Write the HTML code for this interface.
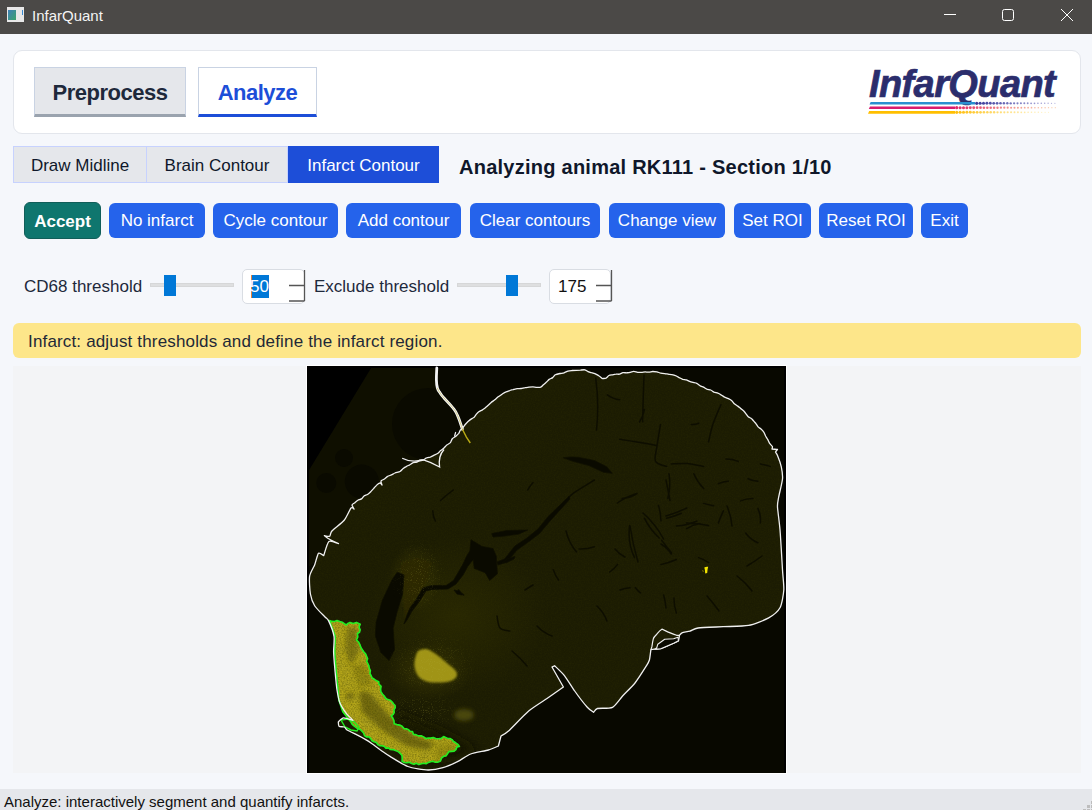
<!DOCTYPE html>
<html><head><meta charset="utf-8">
<style>
*{margin:0;padding:0;box-sizing:border-box}
html,body{width:1092px;height:810px;overflow:hidden;background:#f5f7fb;font-family:"Liberation Sans",sans-serif;position:relative}
.abs{position:absolute}
#title{left:0;top:0;width:1092px;height:34px;background:#4b4947}
#title .t{left:32px;top:7px;font-size:15px;color:#f4f4f4;line-height:18px}
#card{left:13px;top:50px;width:1068px;height:84px;background:#fff;border:1px solid #e3e6ec;border-radius:9px}
.mode{top:67px;height:50px;border:1px solid #c9d3e3;font-weight:bold;font-size:22px;letter-spacing:-0.5px;text-align:center;line-height:50px}
#pre{left:34px;width:152px;background:#e5e7eb;color:#1e293b;border-bottom:3px solid #9aa3ae}
#ana{left:198px;width:119px;background:#fff;color:#1d4ed8;border-bottom:3px solid #1d4ed8}
.tab{top:146px;height:37px;border:1px solid #c7d2fe;background:#e5e7eb;color:#0f172a;font-size:17px;line-height:37px;text-align:center}
.btn{top:203px;height:35px;background:#2563eb;color:#fff;font-size:17px;line-height:35px;text-align:center;border-radius:6px}
.lbl{font-size:17px;color:#1e293b;line-height:20px}
.track{height:4px;background:#dedfe0;border:1px solid #d6d7d8;top:283px}
.handle{width:12px;height:21px;background:#0078d7;top:275px}
.spin{top:269px;height:35px;background:#fff;border:1px solid #d9dde3;border-radius:5px}
#banner{left:13px;top:323px;width:1068px;height:35px;background:#fde68a;border-radius:6px}
#panel{left:13px;top:366px;width:1068px;height:407px;background:#f3f4f6}
#status{left:0;top:789px;width:1092px;height:21px;background:#e5e7eb}
</style></head><body>
<div id="title" class="abs">
  <svg class="abs" style="left:7px;top:7px" width="18" height="15" viewBox="0 0 18 15">
    <defs><linearGradient id="ig" x1="0" y1="0" x2="1" y2="1"><stop offset="0" stop-color="#3f7fb8"/><stop offset="1" stop-color="#3aa36a"/></linearGradient></defs>
    <rect x="0" y="0" width="17" height="15" fill="#e8e8e8"/>
    <rect x="1" y="3" width="8" height="10" fill="url(#ig)"/>
    <rect x="15" y="3" width="1" height="5" fill="#3a8ad0"/>
  </svg>
  <div class="abs t">InfarQuant</div>
  <svg class="abs" style="left:940px;top:0" width="152" height="34" viewBox="0 0 152 34">
    <line x1="4" y1="14.5" x2="16" y2="14.5" stroke="#fff" stroke-width="1"/>
    <rect x="62.5" y="9.5" width="11" height="11" rx="2" fill="none" stroke="#fff" stroke-width="1"/>
    <path d="M121 9 L133 21 M133 9 L121 21" stroke="#fff" stroke-width="1"/>
  </svg>
</div>

<div id="card" class="abs"></div>
<div id="pre" class="abs mode">Preprocess</div>
<div id="ana" class="abs mode">Analyze</div>
<!--LOGO--><div class="abs" style="left:869px;top:62px;font-family:'Liberation Sans',sans-serif;font-weight:bold;font-style:italic;font-size:38px;line-height:44px;color:#2b2d6c;letter-spacing:-0.6px;-webkit-text-stroke:0.7px #2b2d6c">InfarQuant</div><svg class="abs" style="left:862px;top:95px" width="200" height="25" viewBox="0 0 200 25"><path d="M8.7 7.0 L113.0 7.0 L113.0 9.6 L7.5 9.6 Z" fill="#2a8fd0"/><circle cx="114.7" cy="8.3" r="1.60" fill="#3a3a9a" opacity="1.00"/><circle cx="118.1" cy="8.3" r="1.56" fill="#3c3c9b" opacity="0.98"/><circle cx="121.5" cy="8.3" r="1.51" fill="#3e3e9d" opacity="0.96"/><circle cx="124.9" cy="8.3" r="1.47" fill="#40409e" opacity="0.93"/><circle cx="128.3" cy="8.3" r="1.43" fill="#4242a0" opacity="0.91"/><circle cx="131.7" cy="8.3" r="1.38" fill="#4444a2" opacity="0.89"/><circle cx="135.1" cy="8.3" r="1.34" fill="#4646a3" opacity="0.87"/><circle cx="138.5" cy="8.3" r="1.30" fill="#4848a5" opacity="0.85"/><circle cx="141.9" cy="8.3" r="1.25" fill="#4a4aa7" opacity="0.83"/><circle cx="145.3" cy="8.3" r="1.21" fill="#4c4ca8" opacity="0.80"/><circle cx="148.7" cy="8.3" r="1.17" fill="#4e4eaa" opacity="0.78"/><circle cx="152.1" cy="8.3" r="1.12" fill="#5050ac" opacity="0.76"/><circle cx="155.5" cy="8.3" r="1.08" fill="#5353ad" opacity="0.74"/><circle cx="158.9" cy="8.3" r="1.03" fill="#5555af" opacity="0.72"/><circle cx="162.3" cy="8.3" r="0.99" fill="#5757b1" opacity="0.70"/><circle cx="165.7" cy="8.3" r="0.95" fill="#5959b2" opacity="0.67"/><circle cx="169.1" cy="8.3" r="0.90" fill="#5b5bb4" opacity="0.65"/><circle cx="172.5" cy="8.3" r="0.86" fill="#5d5db6" opacity="0.63"/><circle cx="175.9" cy="8.3" r="0.82" fill="#5f5fb7" opacity="0.61"/><circle cx="179.3" cy="8.3" r="0.77" fill="#6161b9" opacity="0.59"/><circle cx="182.7" cy="8.3" r="0.73" fill="#6363bb" opacity="0.57"/><circle cx="186.1" cy="8.3" r="0.69" fill="#6565bc" opacity="0.54"/><circle cx="189.5" cy="8.3" r="0.64" fill="#6767be" opacity="0.52"/><circle cx="192.9" cy="8.3" r="0.60" fill="#6a6ac0" opacity="0.50"/><path d="M8.0 11.4 L93.0 11.4 L93.0 14.0 L6.8 14.0 Z" fill="#d81b6e"/><circle cx="94.7" cy="12.7" r="1.60" fill="#e02a6a" opacity="1.00"/><circle cx="98.1" cy="12.7" r="1.57" fill="#e02e69" opacity="0.98"/><circle cx="101.5" cy="12.7" r="1.53" fill="#e13269" opacity="0.97"/><circle cx="104.9" cy="12.7" r="1.50" fill="#e23668" opacity="0.95"/><circle cx="108.3" cy="12.7" r="1.46" fill="#e23a68" opacity="0.93"/><circle cx="111.7" cy="12.7" r="1.43" fill="#e33e68" opacity="0.91"/><circle cx="115.1" cy="12.7" r="1.39" fill="#e44267" opacity="0.90"/><circle cx="118.5" cy="12.7" r="1.36" fill="#e54667" opacity="0.88"/><circle cx="121.9" cy="12.7" r="1.32" fill="#e54a67" opacity="0.86"/><circle cx="125.3" cy="12.7" r="1.29" fill="#e64e66" opacity="0.84"/><circle cx="128.7" cy="12.7" r="1.26" fill="#e75266" opacity="0.83"/><circle cx="132.1" cy="12.7" r="1.22" fill="#e75666" opacity="0.81"/><circle cx="135.5" cy="12.7" r="1.19" fill="#e85a65" opacity="0.79"/><circle cx="138.9" cy="12.7" r="1.15" fill="#e95e65" opacity="0.78"/><circle cx="142.3" cy="12.7" r="1.12" fill="#ea6265" opacity="0.76"/><circle cx="145.7" cy="12.7" r="1.08" fill="#ea6764" opacity="0.74"/><circle cx="149.1" cy="12.7" r="1.05" fill="#eb6b64" opacity="0.72"/><circle cx="152.5" cy="12.7" r="1.01" fill="#ec6f64" opacity="0.71"/><circle cx="155.9" cy="12.7" r="0.98" fill="#ed7363" opacity="0.69"/><circle cx="159.3" cy="12.7" r="0.94" fill="#ed7763" opacity="0.67"/><circle cx="162.7" cy="12.7" r="0.91" fill="#ee7b63" opacity="0.66"/><circle cx="166.1" cy="12.7" r="0.88" fill="#ef7f62" opacity="0.64"/><circle cx="169.5" cy="12.7" r="0.84" fill="#ef8362" opacity="0.62"/><circle cx="172.9" cy="12.7" r="0.81" fill="#f08762" opacity="0.60"/><circle cx="176.3" cy="12.7" r="0.77" fill="#f18b61" opacity="0.59"/><circle cx="179.7" cy="12.7" r="0.74" fill="#f28f61" opacity="0.57"/><circle cx="183.1" cy="12.7" r="0.70" fill="#f29361" opacity="0.55"/><circle cx="186.5" cy="12.7" r="0.67" fill="#f39760" opacity="0.53"/><circle cx="189.9" cy="12.7" r="0.63" fill="#f49b60" opacity="0.52"/><circle cx="193.3" cy="12.7" r="0.60" fill="#f5a060" opacity="0.50"/><path d="M7.2 15.9 L93.0 15.9 L93.0 18.7 L6.0 18.7 Z" fill="#ffbf00"/><circle cx="94.7" cy="17.3" r="1.60" fill="#ffc010" opacity="1.00"/><circle cx="98.1" cy="17.3" r="1.56" fill="#ffc114" opacity="0.98"/><circle cx="101.5" cy="17.3" r="1.53" fill="#ffc219" opacity="0.96"/><circle cx="104.9" cy="17.3" r="1.49" fill="#ffc41e" opacity="0.94"/><circle cx="108.3" cy="17.3" r="1.45" fill="#ffc522" opacity="0.93"/><circle cx="111.7" cy="17.3" r="1.41" fill="#ffc727" opacity="0.91"/><circle cx="115.1" cy="17.3" r="1.38" fill="#ffc82c" opacity="0.89"/><circle cx="118.5" cy="17.3" r="1.34" fill="#ffca31" opacity="0.87"/><circle cx="121.9" cy="17.3" r="1.30" fill="#ffcb35" opacity="0.85"/><circle cx="125.3" cy="17.3" r="1.27" fill="#ffcd3a" opacity="0.83"/><circle cx="128.7" cy="17.3" r="1.23" fill="#ffce3f" opacity="0.81"/><circle cx="132.1" cy="17.3" r="1.19" fill="#ffd044" opacity="0.80"/><circle cx="135.5" cy="17.3" r="1.16" fill="#ffd148" opacity="0.78"/><circle cx="138.9" cy="17.3" r="1.12" fill="#ffd34d" opacity="0.76"/><circle cx="142.3" cy="17.3" r="1.08" fill="#ffd452" opacity="0.74"/><circle cx="145.7" cy="17.3" r="1.04" fill="#ffd657" opacity="0.72"/><circle cx="149.1" cy="17.3" r="1.01" fill="#ffd75b" opacity="0.70"/><circle cx="152.5" cy="17.3" r="0.97" fill="#ffd960" opacity="0.69"/><circle cx="155.9" cy="17.3" r="0.93" fill="#ffda65" opacity="0.67"/><circle cx="159.3" cy="17.3" r="0.90" fill="#ffdc6a" opacity="0.65"/><circle cx="162.7" cy="17.3" r="0.86" fill="#ffdd6e" opacity="0.63"/><circle cx="166.1" cy="17.3" r="0.82" fill="#ffdf73" opacity="0.61"/><circle cx="169.5" cy="17.3" r="0.79" fill="#ffe078" opacity="0.59"/><circle cx="172.9" cy="17.3" r="0.75" fill="#ffe27d" opacity="0.57"/><circle cx="176.3" cy="17.3" r="0.71" fill="#ffe381" opacity="0.56"/><circle cx="179.7" cy="17.3" r="0.67" fill="#ffe586" opacity="0.54"/><circle cx="183.1" cy="17.3" r="0.64" fill="#ffe68b" opacity="0.52"/><circle cx="186.5" cy="17.3" r="0.60" fill="#ffe890" opacity="0.50"/></svg><!--/LOGO-->

<div class="abs tab" style="left:13px;width:134px">Draw Midline</div>
<div class="abs tab" style="left:146px;width:142px">Brain Contour</div>
<div class="abs tab" style="left:288px;width:151px;background:#1d4ed8;border-color:#1d4ed8;color:#fff">Infarct Contour</div>
<div class="abs" style="left:459px;top:155px;font-size:20px;font-weight:bold;color:#0f172a;line-height:24px;letter-spacing:0.25px">Analyzing animal RK111 - Section 1/10</div>

<div class="abs btn" style="left:24px;width:77px;top:202px;height:37px;line-height:37px;background:#0f766e;border:1px solid #115e59;font-weight:bold">Accept</div>
<div class="abs btn" style="left:109px;width:96px">No infarct</div>
<div class="abs btn" style="left:213px;width:125px">Cycle contour</div>
<div class="abs btn" style="left:346px;width:115px">Add contour</div>
<div class="abs btn" style="left:470px;width:130px">Clear contours</div>
<div class="abs btn" style="left:609px;width:116px">Change view</div>
<div class="abs btn" style="left:734px;width:77px">Set ROI</div>
<div class="abs btn" style="left:819px;width:94px">Reset ROI</div>
<div class="abs btn" style="left:921px;width:47px">Exit</div>

<div class="abs lbl" style="left:24px;top:277px">CD68 threshold</div>
<div class="abs track" style="left:150px;width:84px"></div>
<div class="abs handle" style="left:164px"></div>
<div class="abs spin" style="left:242px;width:63px"></div>
<div class="abs" style="left:251px;top:275px;width:18px;height:23px;background:#0078d7"></div>
<div class="abs" style="left:251px;top:275px;width:1px;height:23px;background:#e8833a"></div>
<div class="abs" style="left:250px;top:276px;font-size:17px;line-height:21px;color:#fff">50</div>
<svg class="abs" style="left:286px;top:269px" width="22" height="36" viewBox="0 0 22 36"><path d="M3 16.5 H18.5 M18.5 1 V32 M3 32 H18.5" stroke="#555" stroke-width="1.3" fill="none"/></svg>
<div class="abs lbl" style="left:314px;top:277px">Exclude threshold</div>
<div class="abs track" style="left:457px;width:84px"></div>
<div class="abs handle" style="left:506px"></div>
<div class="abs spin" style="left:549px;width:62px"></div>
<div class="abs" style="left:558px;top:276px;font-size:17px;line-height:21px;color:#111">175</div>
<svg class="abs" style="left:593px;top:269px" width="22" height="36" viewBox="0 0 22 36"><path d="M3 16.5 H18.5 M18.5 1 V32 M3 32 H18.5" stroke="#555" stroke-width="1.3" fill="none"/></svg>

<div id="banner" class="abs"></div>
<div class="abs lbl" style="left:28px;top:332px;color:#1f2937;letter-spacing:0.16px">Infarct: adjust thresholds and define the infarct region.</div>

<div id="panel" class="abs"></div>
<div id="brainwrap" class="abs" style="left:306px;top:365px;width:481px;height:409px;border:1px solid #fff"></div>
<!--BRAIN--><svg class="abs" style="left:307px;top:366px" width="479" height="407" viewBox="0 0 479 407">
<defs>
<filter id="b2" filterUnits="userSpaceOnUse" x="-60" y="-60" width="600" height="530"><feGaussianBlur stdDeviation="2"/></filter>
<filter id="b4" filterUnits="userSpaceOnUse" x="-60" y="-60" width="600" height="530"><feGaussianBlur stdDeviation="6"/></filter>
<filter id="b1" filterUnits="userSpaceOnUse" x="-60" y="-60" width="600" height="530"><feGaussianBlur stdDeviation="0.9"/></filter>
<filter id="noise" filterUnits="userSpaceOnUse" x="0" y="0" width="479" height="407">
  <feTurbulence type="fractalNoise" baseFrequency="0.7" numOctaves="2" seed="3"/>
  <feColorMatrix values="0 0 0 0 0.05  0 0 0 0 0.05  0 0 0 0 0  0 0 0 -1.6 1.05"/>
</filter>
<filter id="noise2" filterUnits="userSpaceOnUse" x="0" y="0" width="479" height="407">
  <feTurbulence type="fractalNoise" baseFrequency="0.08" numOctaves="3" seed="11"/>
  <feColorMatrix values="0 0 0 0 0.3  0 0 0 0 0.28  0 0 0 0 0.03  0 0 0 -3 1.7"/>
</filter>
<radialGradient id="rg1"><stop offset="0" stop-color="#2a2902" stop-opacity="0.9"/><stop offset="1" stop-color="#2a2902" stop-opacity="0"/></radialGradient>
<radialGradient id="rg2"><stop offset="0" stop-color="#3a3704" stop-opacity="0.8"/><stop offset="1" stop-color="#3a3704" stop-opacity="0"/></radialGradient>
<filter id="speck" filterUnits="userSpaceOnUse" x="0" y="0" width="479" height="407">
  <feTurbulence type="fractalNoise" baseFrequency="0.9" numOctaves="1" seed="5"/>
  <feColorMatrix values="0 0 0 0 0.45  0 0 0 0 0.43  0 0 0 0 0.05  6 0 0 0 -3.4"/>
</filter>
<radialGradient id="rgm"><stop offset="0" stop-color="#fff"/><stop offset="1" stop-color="#000"/></radialGradient>
<mask id="smask" maskUnits="userSpaceOnUse" x="0" y="0" width="479" height="407">
  <ellipse cx="112" cy="210" rx="30" ry="42" fill="url(#rgm)"/>
  <ellipse cx="125" cy="300" rx="50" ry="40" fill="url(#rgm)"/>
  <ellipse cx="115" cy="345" rx="45" ry="25" fill="url(#rgm)"/>
</mask>
<clipPath id="bc"><path d="M2.6 210.3 C3.3 205.4 6.3 202.2 7.8 198.4 C9.3 194.6 10.0 188.8 11.5 187.3 C13.0 185.8 15.8 189.2 16.7 189.6 C17.6 187.2 19.4 177.5 21.9 175.5 C24.4 173.5 29.9 177.3 31.5 177.7 C29.8 176.8 23.5 173.8 21.1 172.5 C18.8 171.2 18.0 170.1 17.4 169.6 C18.3 169.7 21.4 171.1 22.6 170.3 C23.9 169.5 22.4 167.7 24.9 165.0 C27.4 162.3 34.2 157.8 37.4 154.0 C40.6 150.2 42.4 143.8 44.0 142.0 C45.6 140.2 46.5 142.8 47.0 143.0 C46.7 142.3 42.8 141.4 45.0 139.0 C47.2 136.6 55.8 132.2 60.5 128.5 C65.2 124.8 70.6 118.6 73.0 117.0 C75.4 115.4 74.7 118.7 75.0 119.0 C74.8 118.3 71.8 117.0 74.0 115.0 C76.2 113.0 84.8 108.6 88.0 107.0 C91.2 105.4 90.0 107.2 93.0 105.5 C96.0 103.8 102.3 98.7 106.2 96.7 C110.1 94.8 113.0 95.0 116.4 93.8 C119.8 92.6 123.3 91.4 126.7 89.4 C130.1 87.4 133.3 85.2 137.0 82.0 C140.7 78.8 145.5 73.7 148.7 70.3 C151.9 66.9 152.6 65.2 156.0 61.5 C159.4 57.9 165.0 52.0 169.2 48.4 C173.3 44.8 177.2 42.5 180.9 39.6 C184.6 36.7 188.8 32.8 191.2 30.8 C193.6 28.8 192.4 29.2 195.6 27.8 C198.8 26.4 205.8 23.8 210.2 22.7 C214.6 21.6 218.1 21.4 222.0 21.2 C225.9 20.9 230.8 22.0 233.7 21.2 C236.6 20.4 237.1 18.2 239.5 16.1 C241.9 14.0 246.1 10.2 248.3 8.8 C250.6 7.4 250.2 8.2 253.0 7.5 C255.8 6.8 260.9 5.1 265.0 4.5 C269.1 3.9 274.0 3.3 277.8 3.8 C281.6 4.3 286.2 7.0 287.9 7.6 C289.1 8.4 294.1 11.8 295.4 12.6 C297.1 12.0 303.8 9.4 305.5 8.8 C308.4 8.4 316.3 6.8 323.0 6.3 C329.7 5.8 338.6 5.1 345.8 5.5 C353.0 5.9 359.3 7.0 366.0 8.8 C372.7 10.6 379.7 13.9 386.0 16.4 C392.3 18.9 397.8 21.3 403.7 24.0 C409.6 26.7 415.5 28.7 421.4 32.7 C427.3 36.7 433.6 42.9 439.0 47.9 C444.4 52.9 449.6 57.5 454.0 63.0 C458.4 68.5 463.6 77.3 465.4 80.6 C467.2 83.9 465.1 82.6 465.0 83.0 C465.9 83.1 469.6 83.4 470.5 83.5 C470.2 83.9 468.8 85.6 468.5 86.0 C468.8 86.6 469.5 86.9 470.5 89.4 C471.5 91.9 473.5 96.9 474.3 100.8 C475.1 104.7 475.9 108.0 475.5 113.0 C475.1 118.0 472.5 126.3 471.7 131.0 C470.9 135.7 470.3 135.6 470.5 141.0 C470.7 146.4 472.2 153.2 473.0 163.7 C473.8 174.2 474.9 193.9 475.5 204.0 C476.1 214.1 477.2 217.7 476.8 224.0 C476.4 230.3 475.5 237.2 473.0 241.8 C470.5 246.5 466.9 249.0 461.7 251.9 C456.4 254.8 449.1 257.9 441.5 259.4 C433.9 260.9 424.7 260.3 416.3 260.7 C407.9 261.1 396.6 261.3 391.0 262.0 C385.4 262.7 385.7 264.3 383.0 265.1 C380.3 265.9 376.8 266.1 375.0 266.8 C373.2 267.5 372.9 268.9 372.5 269.3 C372.3 270.2 371.7 273.9 371.5 274.8 C370.7 275.2 369.6 275.9 366.6 277.2 C363.7 278.5 356.9 281.7 353.8 282.7 C350.7 283.7 349.5 283.0 347.8 283.1 C346.1 283.2 344.5 283.5 343.9 283.6 C343.6 285.3 343.1 291.3 342.4 294.0 C341.7 296.7 341.9 295.9 339.5 299.7 C337.1 303.5 332.0 311.9 328.0 317.0 C324.0 322.1 319.4 325.9 315.6 330.0 C311.9 334.1 309.7 339.2 305.5 341.3 C301.3 343.4 293.5 341.7 290.4 342.5 C287.2 343.3 287.2 345.7 286.6 346.3 C285.6 345.5 283.5 344.9 280.3 341.3 C277.1 337.8 271.5 330.2 267.7 325.0 C263.9 319.8 261.0 314.0 257.6 309.8 C254.3 305.6 249.3 301.4 247.6 299.7 C247.2 299.9 245.4 300.8 245.0 301.0 C246.9 304.3 254.5 317.7 256.4 321.0 C253.7 322.9 242.7 330.6 240.0 332.5 C236.9 334.6 228.1 339.6 221.7 345.0 C215.3 350.4 206.1 360.8 201.5 365.0 C196.9 369.2 195.2 369.2 194.0 370.0 C193.6 371.7 191.8 378.3 191.4 380.0 C189.7 380.7 186.0 382.7 181.4 384.0 C176.8 385.3 168.8 386.1 163.7 388.0 C158.6 389.9 155.6 393.1 151.0 395.4 C146.4 397.7 141.0 400.3 136.0 401.7 C131.0 403.1 126.9 404.2 121.0 404.0 C115.1 403.8 107.1 402.8 100.8 400.5 C94.5 398.2 87.5 393.1 83.0 390.4 C78.5 387.6 76.4 386.1 73.5 384.0 C70.6 381.9 67.9 379.7 65.4 378.0 C62.9 376.3 61.4 375.2 58.7 373.6 C56.0 372.0 52.1 370.0 49.0 368.4 C45.9 366.8 42.2 365.2 40.2 364.0 C38.2 362.8 38.7 361.6 37.3 361.0 C35.9 360.4 33.0 361.2 32.0 360.3 C31.0 359.4 31.4 356.6 31.3 355.9 C32.2 355.2 34.0 352.1 36.5 351.8 C39.0 351.6 44.4 354.0 46.0 354.4 C45.9 354.3 46.5 354.7 45.4 353.6 C44.3 352.5 41.6 350.5 39.5 347.7 C37.4 344.9 34.4 340.6 32.8 336.6 C31.2 332.7 30.8 329.3 30.0 324.0 C29.2 318.7 28.6 310.9 28.0 304.6 C27.4 298.3 26.8 291.7 26.6 286.0 C26.4 280.3 27.9 275.5 27.0 270.3 C26.1 265.1 23.0 257.8 21.5 254.6 C20.0 251.4 20.3 253.4 18.0 251.0 C15.7 248.6 10.2 243.8 7.8 240.0 C5.4 236.2 4.3 232.9 3.4 228.0 C2.5 223.1 1.9 215.2 2.6 210.3 Z"/></clipPath>
<clipPath id="ic"><path d="M22.6 254.6 L25.1 255.4 L27.5 255.5 L30.0 254.6 L32.8 255.5 L35.2 256.2 L37.2 257.6 L39.3 259.0 L40.9 257.4 L43.0 256.4 L46.2 257.4 L49.5 256.4 L53.2 258.3 L52.0 261.1 L53.2 263.8 L52.5 266.2 L50.4 267.5 L50.8 270.9 L49.5 274.0 L51.5 276.0 L52.8 278.3 L53.7 281.0 L55.0 283.3 L56.7 285.8 L58.7 288.0 L59.6 290.3 L60.6 292.7 L59.7 295.3 L60.8 297.5 L61.9 299.8 L62.3 302.3 L63.4 304.6 L62.9 307.3 L64.1 309.7 L65.2 312.0 L67.3 313.3 L69.4 314.7 L71.7 315.7 L71.9 318.2 L74.1 320.3 L73.6 323.0 L73.9 325.8 L75.4 328.0 L77.3 330.0 L78.7 332.3 L80.8 333.6 L83.4 334.3 L85.2 336.0 L86.4 337.8 L88.1 339.5 L88.2 341.9 L86.9 343.7 L87.2 346.4 L86.2 348.3 L84.2 349.8 L85.9 352.2 L87.0 354.8 L87.2 357.7 L89.8 358.6 L92.6 359.1 L95.1 360.2 L97.0 362.6 L99.4 362.8 L101.4 363.7 L103.1 365.3 L105.5 365.5 L106.5 368.5 L108.9 368.6 L111.3 369.9 L114.2 369.7 L116.6 370.9 L118.8 372.5 L121.3 372.1 L123.8 372.1 L126.2 371.5 L128.7 372.5 L131.6 372.7 L134.3 372.4 L136.6 370.5 L138.6 371.4 L140.6 372.5 L143.0 372.5 L145.0 373.6 L146.5 375.5 L148.7 376.8 L150.8 378.3 L152.4 380.4 L150.0 380.9 L148.9 383.6 L147.1 385.2 L144.5 385.4 L141.9 385.6 L140.5 387.8 L139.1 389.9 L136.6 390.3 L134.5 392.2 L133.5 395.1 L130.6 396.2 L128.3 396.3 L125.9 395.3 L123.6 395.8 L121.4 396.4 L119.1 397.7 L116.8 397.2 L114.4 397.8 L111.9 398.6 L109.3 397.2 L106.9 398.2 L104.6 397.5 L102.4 396.3 L99.7 396.8 L97.3 396.5 L95.1 395.2 L95.2 392.4 L95.0 389.6 L93.1 387.3 L91.0 385.5 L88.4 384.6 L86.0 383.6 L83.2 383.4 L81.5 381.9 L78.9 382.1 L77.3 380.4 L75.1 379.8 L72.8 379.6 L70.8 378.6 L69.4 376.5 L67.1 375.8 L65.1 374.7 L63.7 372.6 L62.1 370.9 L59.4 370.9 L57.5 369.6 L56.6 367.1 L55.0 365.2 L53.2 363.5 L50.6 362.6 L48.6 361.1 L46.6 359.7 L44.9 357.9 L43.7 355.7 L35.8 345.8 L31.8 334.0 L31.0 323.0 L29.1 304.6 L27.7 286.0 L28.2 270.3 Z"/></clipPath>
</defs>
<rect width="479" height="407" fill="#080800"/>
<defs><clipPath id="olive"><path d="M64 2 L129.5 2 L129.5 19 L135.5 31 L147 47 L156 62 L3 200 L2 200 L2 104 Z"/></clipPath></defs>
<path d="M64 2 L129.5 2 L129.5 19 L135.5 31 L147 47 L156 62 L3 200 L2 200 L2 104 Z" fill="#0f0f00"/>
<g fill="#0a0a00" clip-path="url(#olive)">
<circle cx="121" cy="58" r="36"/><circle cx="37" cy="92" r="9"/><circle cx="19.3" cy="117" r="10"/><circle cx="54.8" cy="115.6" r="17"/>
</g>
<path d="M0 0 L479 0 L479 2 L64 2 L2 104 L2 407 L0 407 Z" fill="#000"/>
<rect x="477" y="0" width="2" height="407" fill="#000"/>
<path d="M2.6 210.3 C3.3 205.4 6.3 202.2 7.8 198.4 C9.3 194.6 10.0 188.8 11.5 187.3 C13.0 185.8 15.8 189.2 16.7 189.6 C17.6 187.2 19.4 177.5 21.9 175.5 C24.4 173.5 29.9 177.3 31.5 177.7 C29.8 176.8 23.5 173.8 21.1 172.5 C18.8 171.2 18.0 170.1 17.4 169.6 C18.3 169.7 21.4 171.1 22.6 170.3 C23.9 169.5 22.4 167.7 24.9 165.0 C27.4 162.3 34.2 157.8 37.4 154.0 C40.6 150.2 42.4 143.8 44.0 142.0 C45.6 140.2 46.5 142.8 47.0 143.0 C46.7 142.3 42.8 141.4 45.0 139.0 C47.2 136.6 55.8 132.2 60.5 128.5 C65.2 124.8 70.6 118.6 73.0 117.0 C75.4 115.4 74.7 118.7 75.0 119.0 C74.8 118.3 71.8 117.0 74.0 115.0 C76.2 113.0 84.8 108.6 88.0 107.0 C91.2 105.4 90.0 107.2 93.0 105.5 C96.0 103.8 102.3 98.7 106.2 96.7 C110.1 94.8 113.0 95.0 116.4 93.8 C119.8 92.6 123.3 91.4 126.7 89.4 C130.1 87.4 133.3 85.2 137.0 82.0 C140.7 78.8 145.5 73.7 148.7 70.3 C151.9 66.9 152.6 65.2 156.0 61.5 C159.4 57.9 165.0 52.0 169.2 48.4 C173.3 44.8 177.2 42.5 180.9 39.6 C184.6 36.7 188.8 32.8 191.2 30.8 C193.6 28.8 192.4 29.2 195.6 27.8 C198.8 26.4 205.8 23.8 210.2 22.7 C214.6 21.6 218.1 21.4 222.0 21.2 C225.9 20.9 230.8 22.0 233.7 21.2 C236.6 20.4 237.1 18.2 239.5 16.1 C241.9 14.0 246.1 10.2 248.3 8.8 C250.6 7.4 250.2 8.2 253.0 7.5 C255.8 6.8 260.9 5.1 265.0 4.5 C269.1 3.9 274.0 3.3 277.8 3.8 C281.6 4.3 286.2 7.0 287.9 7.6 C289.1 8.4 294.1 11.8 295.4 12.6 C297.1 12.0 303.8 9.4 305.5 8.8 C308.4 8.4 316.3 6.8 323.0 6.3 C329.7 5.8 338.6 5.1 345.8 5.5 C353.0 5.9 359.3 7.0 366.0 8.8 C372.7 10.6 379.7 13.9 386.0 16.4 C392.3 18.9 397.8 21.3 403.7 24.0 C409.6 26.7 415.5 28.7 421.4 32.7 C427.3 36.7 433.6 42.9 439.0 47.9 C444.4 52.9 449.6 57.5 454.0 63.0 C458.4 68.5 463.6 77.3 465.4 80.6 C467.2 83.9 465.1 82.6 465.0 83.0 C465.9 83.1 469.6 83.4 470.5 83.5 C470.2 83.9 468.8 85.6 468.5 86.0 C468.8 86.6 469.5 86.9 470.5 89.4 C471.5 91.9 473.5 96.9 474.3 100.8 C475.1 104.7 475.9 108.0 475.5 113.0 C475.1 118.0 472.5 126.3 471.7 131.0 C470.9 135.7 470.3 135.6 470.5 141.0 C470.7 146.4 472.2 153.2 473.0 163.7 C473.8 174.2 474.9 193.9 475.5 204.0 C476.1 214.1 477.2 217.7 476.8 224.0 C476.4 230.3 475.5 237.2 473.0 241.8 C470.5 246.5 466.9 249.0 461.7 251.9 C456.4 254.8 449.1 257.9 441.5 259.4 C433.9 260.9 424.7 260.3 416.3 260.7 C407.9 261.1 396.6 261.3 391.0 262.0 C385.4 262.7 385.7 264.3 383.0 265.1 C380.3 265.9 376.8 266.1 375.0 266.8 C373.2 267.5 372.9 268.9 372.5 269.3 C372.3 270.2 371.7 273.9 371.5 274.8 C370.7 275.2 369.6 275.9 366.6 277.2 C363.7 278.5 356.9 281.7 353.8 282.7 C350.7 283.7 349.5 283.0 347.8 283.1 C346.1 283.2 344.5 283.5 343.9 283.6 C343.6 285.3 343.1 291.3 342.4 294.0 C341.7 296.7 341.9 295.9 339.5 299.7 C337.1 303.5 332.0 311.9 328.0 317.0 C324.0 322.1 319.4 325.9 315.6 330.0 C311.9 334.1 309.7 339.2 305.5 341.3 C301.3 343.4 293.5 341.7 290.4 342.5 C287.2 343.3 287.2 345.7 286.6 346.3 C285.6 345.5 283.5 344.9 280.3 341.3 C277.1 337.8 271.5 330.2 267.7 325.0 C263.9 319.8 261.0 314.0 257.6 309.8 C254.3 305.6 249.3 301.4 247.6 299.7 C247.2 299.9 245.4 300.8 245.0 301.0 C246.9 304.3 254.5 317.7 256.4 321.0 C253.7 322.9 242.7 330.6 240.0 332.5 C236.9 334.6 228.1 339.6 221.7 345.0 C215.3 350.4 206.1 360.8 201.5 365.0 C196.9 369.2 195.2 369.2 194.0 370.0 C193.6 371.7 191.8 378.3 191.4 380.0 C189.7 380.7 186.0 382.7 181.4 384.0 C176.8 385.3 168.8 386.1 163.7 388.0 C158.6 389.9 155.6 393.1 151.0 395.4 C146.4 397.7 141.0 400.3 136.0 401.7 C131.0 403.1 126.9 404.2 121.0 404.0 C115.1 403.8 107.1 402.8 100.8 400.5 C94.5 398.2 87.5 393.1 83.0 390.4 C78.5 387.6 76.4 386.1 73.5 384.0 C70.6 381.9 67.9 379.7 65.4 378.0 C62.9 376.3 61.4 375.2 58.7 373.6 C56.0 372.0 52.1 370.0 49.0 368.4 C45.9 366.8 42.2 365.2 40.2 364.0 C38.2 362.8 38.7 361.6 37.3 361.0 C35.9 360.4 33.0 361.2 32.0 360.3 C31.0 359.4 31.4 356.6 31.3 355.9 C32.2 355.2 34.0 352.1 36.5 351.8 C39.0 351.6 44.4 354.0 46.0 354.4 C45.9 354.3 46.5 354.7 45.4 353.6 C44.3 352.5 41.6 350.5 39.5 347.7 C37.4 344.9 34.4 340.6 32.8 336.6 C31.2 332.7 30.8 329.3 30.0 324.0 C29.2 318.7 28.6 310.9 28.0 304.6 C27.4 298.3 26.8 291.7 26.6 286.0 C26.4 280.3 27.9 275.5 27.0 270.3 C26.1 265.1 23.0 257.8 21.5 254.6 C20.0 251.4 20.3 253.4 18.0 251.0 C15.7 248.6 10.2 243.8 7.8 240.0 C5.4 236.2 4.3 232.9 3.4 228.0 C2.5 223.1 1.9 215.2 2.6 210.3 Z" fill="#1c1c03"/>
<g clip-path="url(#bc)">
  <ellipse cx="150" cy="250" rx="90" ry="80" fill="url(#rg1)"/>
  <ellipse cx="108" cy="212" rx="26" ry="34" fill="url(#rg2)"/>
  <ellipse cx="122" cy="305" rx="42" ry="30" fill="url(#rg2)"/>
  <g fill="#2a2803" filter="url(#b1)">
    <path d="M94 196 L110 192 L124 196 L121 214 L112 228 L104 242 L98 254 L96 230 Z" opacity="0.8"/>
  </g>
  <g fill="#131300" filter="url(#b4)">
    <path d="M88 345 L130 362 L172 385 L130 395 L88 380 Z"/>
  </g>
  <rect width="479" height="407" filter="url(#noise)" opacity="0.2"/>
  <g fill="#0a0a00" stroke="#0f0f00" stroke-width="0.8" stroke-linejoin="round">
    <path d="M90.2 206.2 L97 209 L95.6 228 L90.2 245.6 L86.1 262 L87.5 283.7 L82 294.5 L73.9 286.4 L68.4 270 L69.1 256.5 L75.2 234.8 L84.7 214.4 Z"/>
    <path d="M97 257.9 L100 249 L103 242 L109.2 233.5 L116 222 L124.1 219.6 L139.1 219.6 L146.5 214.5 L151.5 206 L156 198 L159.6 190.3 L162.9 184.8 L164 173.8 L175 180.4 L186 182.6 L189.3 190.3 L190.4 207.8 L182.7 214.4 L178.3 206.7 L167.3 202.4 L166.2 193.6 L161 200 L156 209 L149 218 L141 223 L125 223.5 L119 225 L112 236 L105 245 L100 254 Z"/>
    <path d="M190 196 L197.6 193 L207.9 180 L220 172 L231 163 L241.2 150.5 L251 141 L261.7 130.5 L263 133 L253 144 L243 155 L233 167 L222 175.5 L210 184 L200 196 L191 199 Z"/>
    <path d="M194.8 197 L201 192.5 L208 190.5 L207 193 L200 196.5 Z"/>
    <path d="M184.8 167.5 L200 164.5 L220.7 164 L212 168 L198 170 L186 171 Z"/>
    <path d="M147 224 L152 225 L155 229 L150 228 Z"/>
    <path d="M256.3 91.8 Q263 90.5 270.8 91.2 L287.4 94.5 L299.7 100.7 L305.2 107.3 L296.3 106.2 L281.9 99.6 L265.2 95.1 Z"/>
  </g>
  <g filter="url(#b1)" fill="#a09414">
    <path d="M114.5 283.6 C117.7 282.8 119.7 282.6 124.9 285.4 C130.1 288.2 135.5 293.3 140.4 297.5 C145.3 301.7 148.5 303.3 149.6 306.6 C150.7 309.9 149.6 312.0 146.0 314.0 C142.4 316.0 137.8 316.6 131.8 316.6 C125.8 316.6 121.0 316.7 116.2 314.0 C111.4 311.3 109.4 308.1 108.0 303.2 C106.6 298.3 107.7 293.2 109.0 289.3 C110.3 285.4 111.3 284.4 114.5 283.6 Z"/>
  </g>
  <g filter="url(#b2)" fill="#4a460a">
    <ellipse cx="157" cy="349" rx="10" ry="6"/>
  </g>
  <rect width="479" height="407" filter="url(#speck)" mask="url(#smask)" opacity="0.25"/>
  <path d="M310.4 137.0 Q318.6 130.9 328.4 128.0 M336.0 147.0 Q348.6 158.2 356.6 173.0 M323.0 160.0 Q325.7 178.3 331.0 196.0 M259.0 165.0 Q261.7 176.6 269.4 185.8 M272.0 183.0 Q279.9 183.4 287.4 180.7 M359.0 114.0 Q361.1 124.2 363.0 134.5 M359.0 150.0 Q369.7 146.9 379.7 142.0 M369.4 160.0 Q380.1 159.4 390.0 155.0 M354.0 178.0 Q360.4 181.7 364.3 188.0 M354.0 198.6 Q361.9 196.8 369.4 193.5 M308.0 183.0 Q312.0 188.2 318.0 191.0 M302.7 206.0 Q307.2 203.0 310.4 198.6 M246.3 203.7 Q248.1 209.2 251.5 214.0 M218.0 224.0 Q222.0 221.4 226.0 219.0 M313.0 224.0 Q317.8 221.9 323.0 221.7 M328.4 221.7 Q330.5 224.7 333.5 226.8 M356.6 229.0 Q358.5 235.4 359.0 242.0 M367.0 232.0 Q366.8 239.7 369.4 247.0 M190.0 250.0 C190.5 252.0 190.9 259.5 193.0 262.0 C195.1 264.5 201.1 264.5 202.7 265.0 M125.8 144.8 Q125.7 150.3 128.4 155.0 M133.5 134.5 Q139.6 128.9 146.3 124.0 M220.7 124.0 Q223.1 120.1 226.0 116.6 M151.5 224.0 Q153.4 227.2 156.6 229.0 M354.0 155.0 Q353.8 147.1 351.5 139.6 M379.7 162.7 Q385.8 158.8 393.0 157.6 M312.7 73.2 C315.6 73.7 323.8 75.0 330.0 76.0 C336.2 77.0 346.4 78.8 349.7 79.4 M353.5 58.4 C352.9 62.0 350.8 73.8 350.0 80.0 C349.2 86.2 346.9 92.0 348.5 95.4 C350.1 98.8 357.8 99.6 359.6 100.4 M337.4 43.6 Q336.3 50.3 332.5 56.0 M364.5 97.9 C367.1 97.8 374.6 97.1 380.0 97.5 C385.4 97.9 393.8 99.9 396.6 100.4 M413.9 38.7 C412.6 41.9 408.1 51.8 406.0 58.0 C403.9 64.2 402.3 72.8 401.6 75.7 M362.0 107.8 Q364.0 120.2 360.9 132.4 M315.2 132.4 Q323.2 131.7 330.0 127.5 M386.8 107.8 Q390.3 116.1 396.6 122.6 M418.8 93.0 Q425.3 92.9 431.2 95.4 M337.4 152.2 Q342.9 163.5 352.2 172.0 M322.6 159.6 Q320.4 176.3 327.5 191.6 M359.6 152.2 Q367.2 150.4 374.4 147.2 M379.4 157.0 Q390.6 157.3 401.6 159.6 M396.6 137.4 Q401.5 138.7 406.5 139.8 M433.6 134.9 Q439.5 132.3 446.0 132.4 M450.9 142.3 Q454.3 149.3 453.4 157.0 M438.6 167.0 Q443.4 173.6 450.9 176.8 M416.4 144.8 Q413.4 150.7 411.4 157.0 M354.7 174.4 Q359.5 180.6 364.5 186.7 M300.4 28.8 Q305.9 32.9 312.7 33.7 M453.4 97.9 Q458.3 99.0 463.2 100.4 M384.3 58.4 Q388.1 58.6 391.7 57.2 M441.0 112.7 Q445.7 114.9 450.9 115.2 M411.4 117.6 Q416.1 115.5 421.3 115.2 M391.7 191.6 Q397.0 193.4 401.6 196.6 M261.7 132.0 C262.6 131.1 262.5 129.8 266.8 126.8 C271.1 123.8 284.0 116.1 287.4 114.0 M288.7 12.0 Q292.3 38.0 289.5 64.0 M337.0 9.0 C336.8 14.2 336.2 32.2 336.0 40.0 C335.8 47.8 335.7 53.1 335.6 55.7 M420.0 140.0 Q424.1 149.6 425.0 160.0 M440.0 200.0 Q447.8 195.4 455.0 190.0 M430.0 210.0 Q438.6 216.4 445.0 225.0 M400.0 230.0 Q406.4 237.2 412.0 245.0 M290.0 240.0 Q296.7 246.4 300.0 255.0 M230.0 260.0 Q236.3 266.8 245.0 270.0 M205.0 285.0 Q213.2 291.8 220.0 300.0" fill="none" stroke="#0a0a00" stroke-width="1.5" stroke-linecap="round" opacity="0.8"/>
</g>
<g clip-path="url(#ic)">
  <rect width="479" height="407" fill="#b4a61a"/>
  <g filter="url(#b2)" fill="#6a620e" opacity="0.85">
    <path d="M52 326 L62 326 L82 350 L108 370 L128 378 L120 384 L100 380 L75 364 L55 346 Z"/>
    <path d="M40 262 L50 262 L52 285 L44 300 L38 285 Z" opacity="0.75"/>
    <circle cx="43" cy="330" r="3.5"/>
    <path d="M45 300 L58 298 L66 318 L52 322 Z" opacity="0.45"/>
    <path d="M130 380 L150 378 L145 390 L128 395 Z" opacity="0.35"/>
  </g>
  <rect width="479" height="407" filter="url(#noise2)" opacity="0.2"/>
  <rect width="479" height="407" filter="url(#noise)" opacity="0.5"/>
</g>
<path d="M22.6 254.6 L25.1 255.4 L27.5 255.5 L30.0 254.6 L32.8 255.5 L35.2 256.2 L37.2 257.6 L39.3 259.0 L40.9 257.4 L43.0 256.4 L46.2 257.4 L49.5 256.4 L53.2 258.3 L52.0 261.1 L53.2 263.8 L52.5 266.2 L50.4 267.5 L50.8 270.9 L49.5 274.0 L51.5 276.0 L52.8 278.3 L53.7 281.0 L55.0 283.3 L56.7 285.8 L58.7 288.0 L59.6 290.3 L60.6 292.7 L59.7 295.3 L60.8 297.5 L61.9 299.8 L62.3 302.3 L63.4 304.6 L62.9 307.3 L64.1 309.7 L65.2 312.0 L67.3 313.3 L69.4 314.7 L71.7 315.7 L71.9 318.2 L74.1 320.3 L73.6 323.0 L73.9 325.8 L75.4 328.0 L77.3 330.0 L78.7 332.3 L80.8 333.6 L83.4 334.3 L85.2 336.0 L86.4 337.8 L88.1 339.5 L88.2 341.9 L86.9 343.7 L87.2 346.4 L86.2 348.3 L84.2 349.8 L85.9 352.2 L87.0 354.8 L87.2 357.7 L89.8 358.6 L92.6 359.1 L95.1 360.2 L97.0 362.6 L99.4 362.8 L101.4 363.7 L103.1 365.3 L105.5 365.5 L106.5 368.5 L108.9 368.6 L111.3 369.9 L114.2 369.7 L116.6 370.9 L118.8 372.5 L121.3 372.1 L123.8 372.1 L126.2 371.5 L128.7 372.5 L131.6 372.7 L134.3 372.4 L136.6 370.5 L138.6 371.4 L140.6 372.5 L143.0 372.5 L145.0 373.6 L146.5 375.5 L148.7 376.8 L150.8 378.3 L152.4 380.4 L150.0 380.9 L148.9 383.6 L147.1 385.2 L144.5 385.4 L141.9 385.6 L140.5 387.8 L139.1 389.9 L136.6 390.3 L134.5 392.2 L133.5 395.1 L130.6 396.2 L128.3 396.3 L125.9 395.3 L123.6 395.8 L121.4 396.4 L119.1 397.7 L116.8 397.2 L114.4 397.8 L111.9 398.6 L109.3 397.2 L106.9 398.2 L104.6 397.5 L102.4 396.3 L99.7 396.8 L97.3 396.5 L95.1 395.2 L95.2 392.4 L95.0 389.6 L93.1 387.3 L91.0 385.5 L88.4 384.6 L86.0 383.6 L83.2 383.4 L81.5 381.9 L78.9 382.1 L77.3 380.4 L75.1 379.8 L72.8 379.6 L70.8 378.6 L69.4 376.5 L67.1 375.8 L65.1 374.7 L63.7 372.6 L62.1 370.9 L59.4 370.9 L57.5 369.6 L56.6 367.1 L55.0 365.2 L53.2 363.5 L50.6 362.6 L48.6 361.1 L46.6 359.7 L44.9 357.9 L43.7 355.7 L35.8 345.8 L31.8 334.0 L31.0 323.0 L29.1 304.6 L27.7 286.0 L28.2 270.3 Z" fill="none" stroke="#22ee22" stroke-width="1.6" stroke-linejoin="round"/>
<path d="M34 354 L41 353 L47 355.5 L52 361 L50 365 L44 364 L38 361 Z" fill="none" stroke="#22ee22" stroke-width="1.4"/>
<path d="M2.6 210.3 C3.1 206.8 6.8 201.1 7.8 198.4 C8.8 195.7 10.5 188.3 11.5 187.3 C12.5 186.3 16.1 189.3 16.7 189.6 C17.3 188.0 20.2 176.9 21.9 175.5 C23.6 174.1 30.4 177.4 31.5 177.7 C30.3 177.1 22.7 173.4 21.1 172.5 C19.5 171.6 17.8 169.9 17.4 169.6 C18.0 169.7 21.7 170.8 22.6 170.3 C23.5 169.8 23.2 166.9 24.9 165.0 C26.6 163.1 35.2 156.7 37.4 154.0 C39.6 151.3 42.9 143.3 44.0 142.0 C45.1 140.7 46.6 142.9 47.0 143.0 C46.8 142.5 44.9 139.7 45.0 139.0 C45.1 138.3 47.3 137.2 47.9 136.7 C48.6 136.1 50.1 134.8 50.9 134.3 C51.6 133.9 53.7 133.4 54.4 132.9 C55.2 132.4 56.3 130.5 57.0 130.0 C57.7 129.5 59.7 129.0 60.5 128.5 C61.3 128.0 63.0 126.4 63.7 125.7 C64.4 125.0 65.9 123.3 66.6 122.6 C67.3 121.9 68.7 120.0 69.4 119.4 C70.1 118.7 72.3 117.0 73.0 117.0 C73.7 117.0 74.8 118.8 75.0 119.0 C74.9 118.5 73.7 115.7 74.0 115.0 C74.3 114.3 76.7 113.6 77.5 113.0 C78.3 112.5 79.8 110.8 80.6 110.4 C81.4 109.9 83.6 109.3 84.4 108.9 C85.3 108.5 87.0 107.4 88.0 107.0 C89.0 106.6 92.1 106.0 93.0 105.5 C93.9 105.0 95.2 103.3 95.9 102.7 C96.6 102.2 98.4 101.0 99.2 100.6 C100.0 100.1 102.0 99.2 102.8 98.8 C103.6 98.3 105.4 97.0 106.2 96.7 C107.0 96.4 109.0 96.5 109.7 96.2 C110.5 95.9 112.1 94.5 112.8 94.2 C113.6 93.9 115.6 94.1 116.4 93.8 C117.2 93.5 118.8 92.2 119.7 91.9 C120.5 91.6 122.5 91.3 123.3 91.1 C124.2 90.8 125.9 89.8 126.7 89.4 C127.5 89.0 129.7 88.1 130.6 87.5 C131.4 87.0 132.9 85.2 133.6 84.6 C134.4 83.9 136.3 82.7 137.0 82.0 C137.7 81.3 139.1 79.6 139.8 79.0 C140.6 78.3 142.8 77.4 143.4 76.7 C144.0 76.0 144.6 73.5 145.3 72.7 C145.9 72.0 148.0 70.9 148.7 70.3 C149.4 69.7 151.0 68.4 151.6 67.7 C152.1 67.0 152.8 64.9 153.3 64.2 C153.8 63.5 155.4 62.2 156.0 61.5 C156.6 60.8 157.7 59.1 158.2 58.5 C158.8 57.8 160.2 56.4 160.8 55.8 C161.5 55.2 163.0 53.9 163.7 53.4 C164.4 52.9 166.3 52.0 166.9 51.4 C167.6 50.8 168.6 49.1 169.2 48.4 C169.8 47.7 171.1 46.3 171.8 45.8 C172.5 45.3 174.4 44.5 175.1 44.1 C175.9 43.7 177.4 42.5 178.1 42.0 C178.8 41.5 180.2 40.2 180.9 39.6 C181.6 39.0 183.4 37.2 184.2 36.5 C185.0 35.8 187.0 34.5 187.8 33.8 C188.6 33.1 190.3 31.5 191.2 30.8 C192.1 30.1 194.7 28.4 195.6 27.8 C196.5 27.2 198.2 26.2 199.0 25.9 C199.8 25.5 201.8 24.9 202.7 24.6 C203.5 24.3 205.5 23.8 206.4 23.5 C207.3 23.3 209.3 22.8 210.2 22.7 C211.1 22.6 213.3 22.6 214.2 22.5 C215.1 22.4 217.1 21.7 218.1 21.6 C219.0 21.4 221.1 21.3 222.0 21.2 C222.9 21.1 225.0 20.9 225.9 20.9 C226.8 20.9 228.9 21.3 229.8 21.3 C230.7 21.4 232.9 21.5 233.7 21.2 C234.5 20.9 235.9 19.2 236.6 18.6 C237.2 18.0 238.8 16.7 239.5 16.1 C240.2 15.5 241.5 13.9 242.2 13.4 C242.9 12.9 245.0 12.1 245.7 11.6 C246.4 11.1 247.4 9.3 248.3 8.8 C249.2 8.3 252.0 7.7 253.0 7.5 C254.0 7.3 256.2 7.1 257.1 6.8 C258.0 6.5 260.0 5.4 260.9 5.1 C261.8 4.8 264.0 4.6 265.0 4.5 C266.0 4.4 268.3 4.4 269.3 4.4 C270.3 4.3 272.5 4.1 273.5 4.1 C274.5 4.0 276.9 3.6 277.8 3.8 C278.7 4.0 280.2 5.3 281.0 5.6 C281.7 6.0 283.6 6.4 284.4 6.7 C285.2 6.9 287.5 7.5 287.9 7.6 C288.4 7.9 291.0 9.2 291.8 9.8 C292.7 10.4 295.0 12.3 295.4 12.6 C295.8 12.5 298.3 12.4 299.0 12.1 C299.8 11.7 301.2 9.9 301.9 9.5 C302.7 9.1 305.1 8.9 305.5 8.8 C305.9 8.7 308.2 8.2 309.0 8.2 C309.8 8.1 311.7 8.4 312.6 8.2 C313.4 8.0 315.1 6.9 315.9 6.7 C316.7 6.6 318.7 6.8 319.5 6.8 C320.3 6.7 322.2 6.5 323.0 6.3 C323.8 6.1 325.9 5.4 326.8 5.4 C327.7 5.4 329.7 6.2 330.6 6.3 C331.5 6.4 333.5 6.4 334.4 6.3 C335.3 6.3 337.3 5.9 338.2 5.9 C339.1 5.9 341.1 6.3 342.0 6.2 C342.9 6.2 344.9 5.5 345.8 5.5 C346.7 5.5 349.0 5.7 349.9 5.9 C350.8 6.1 352.9 6.9 353.8 7.1 C354.8 7.3 356.9 7.5 357.9 7.6 C358.8 7.8 361.0 8.1 361.9 8.3 C362.9 8.4 365.1 8.6 366.0 8.8 C366.9 9.0 368.6 9.6 369.4 10.0 C370.1 10.4 371.7 11.5 372.5 11.8 C373.2 12.2 374.9 13.0 375.7 13.3 C376.5 13.5 378.6 13.6 379.3 13.8 C380.1 14.1 381.8 15.1 382.6 15.4 C383.3 15.7 385.2 16.2 386.0 16.4 C386.8 16.6 389.0 16.9 389.8 17.3 C390.6 17.7 392.2 19.3 393.0 19.7 C393.7 20.2 395.7 20.8 396.5 21.2 C397.3 21.6 399.0 22.9 399.8 23.2 C400.7 23.5 402.9 23.7 403.7 24.0 C404.5 24.3 406.2 25.8 407.0 26.2 C407.9 26.6 410.1 26.8 410.9 27.2 C411.8 27.5 413.6 28.6 414.4 29.1 C415.2 29.5 416.9 30.8 417.7 31.2 C418.6 31.6 420.6 32.3 421.4 32.7 C422.2 33.1 424.1 34.1 424.8 34.7 C425.5 35.2 426.6 37.1 427.3 37.7 C428.0 38.3 429.8 39.4 430.5 39.9 C431.3 40.4 432.8 41.8 433.5 42.4 C434.2 42.9 435.9 44.2 436.5 44.8 C437.2 45.5 438.5 47.2 439.0 47.9 C439.5 48.6 440.6 50.2 441.2 50.7 C441.8 51.3 443.8 52.0 444.4 52.5 C445.1 53.0 446.2 54.5 446.8 55.2 C447.3 55.8 448.6 57.2 449.1 57.8 C449.6 58.5 450.5 60.3 451.1 60.9 C451.6 61.5 453.3 62.4 454.0 63.0 C454.7 63.6 456.3 65.3 456.8 66.2 C457.4 67.0 458.2 69.1 458.6 70.0 C459.1 70.9 460.3 72.7 460.8 73.6 C461.2 74.5 462.1 76.6 462.6 77.4 C463.1 78.2 465.1 79.9 465.4 80.6 C465.7 81.3 465.0 82.7 465.0 83.0 C465.6 83.1 469.9 83.4 470.5 83.5 C470.3 83.8 468.7 85.7 468.5 86.0 C468.7 86.4 469.8 87.7 470.5 89.4 C471.2 91.1 473.7 98.0 474.3 100.8 C474.9 103.6 475.8 109.5 475.5 113.0 C475.2 116.5 472.3 127.7 471.7 131.0 C471.1 134.3 470.3 137.2 470.5 141.0 C470.7 144.8 472.4 156.3 473.0 163.7 C473.6 171.0 475.1 197.0 475.5 204.0 C475.9 211.0 477.1 219.6 476.8 224.0 C476.5 228.4 474.8 238.5 473.0 241.8 C471.2 245.1 465.4 249.8 461.7 251.9 C458.0 254.0 446.8 258.4 441.5 259.4 C436.2 260.4 422.2 260.4 416.3 260.7 C410.4 261.0 394.9 261.5 391.0 262.0 C387.1 262.5 384.9 264.5 383.0 265.1 C381.1 265.7 376.2 266.3 375.0 266.8 C373.8 267.3 372.8 269.0 372.5 269.3 C372.4 269.9 371.6 274.2 371.5 274.8 C370.9 275.1 368.7 276.3 366.6 277.2 C364.5 278.1 356.0 282.0 353.8 282.7 C351.6 283.4 349.0 283.0 347.8 283.1 C346.6 283.2 344.4 283.5 343.9 283.6 C343.7 284.8 342.9 292.1 342.4 294.0 C341.9 295.9 341.2 297.0 339.5 299.7 C337.8 302.4 330.8 313.5 328.0 317.0 C325.2 320.5 318.2 327.2 315.6 330.0 C313.0 332.8 308.4 339.8 305.5 341.3 C302.6 342.8 292.6 341.9 290.4 342.5 C288.2 343.1 287.0 345.9 286.6 346.3 C285.9 345.7 282.5 343.8 280.3 341.3 C278.1 338.8 270.3 328.7 267.7 325.0 C265.1 321.3 259.9 312.8 257.6 309.8 C255.3 306.8 248.8 300.9 247.6 299.7 C247.3 299.9 245.3 300.8 245.0 301.0 C246.3 303.3 255.1 318.7 256.4 321.0 C254.5 322.3 241.9 331.2 240.0 332.5 C237.9 334.0 226.2 341.2 221.7 345.0 C217.2 348.8 204.7 362.1 201.5 365.0 C198.3 367.9 194.9 369.4 194.0 370.0 C193.7 371.2 191.7 378.8 191.4 380.0 C190.2 380.5 184.6 383.1 181.4 384.0 C178.2 384.9 167.2 386.7 163.7 388.0 C160.2 389.3 154.2 393.8 151.0 395.4 C147.8 397.0 139.5 400.7 136.0 401.7 C132.5 402.7 125.1 404.1 121.0 404.0 C116.9 403.9 105.2 402.1 100.8 400.5 C96.4 398.9 86.2 392.3 83.0 390.4 C79.8 388.5 75.6 385.4 73.5 384.0 C71.4 382.6 67.1 379.2 65.4 378.0 C63.7 376.8 60.6 374.7 58.7 373.6 C56.8 372.5 51.2 369.5 49.0 368.4 C46.8 367.3 41.6 364.9 40.2 364.0 C38.8 363.1 38.3 361.4 37.3 361.0 C36.3 360.6 32.7 360.9 32.0 360.3 C31.3 359.7 31.4 356.4 31.3 355.9 C31.9 355.4 34.8 352.0 36.5 351.8 C38.2 351.6 44.9 354.1 46.0 354.4 C45.9 354.3 46.2 354.4 45.4 353.6 C44.6 352.8 41.0 349.7 39.5 347.7 C38.0 345.7 33.9 339.4 32.8 336.6 C31.7 333.8 30.6 327.7 30.0 324.0 C29.4 320.3 28.4 309.0 28.0 304.6 C27.6 300.2 26.7 290.0 26.6 286.0 C26.5 282.0 27.6 274.0 27.0 270.3 C26.4 266.6 22.6 256.9 21.5 254.6 C20.4 252.3 19.6 252.7 18.0 251.0 C16.4 249.3 9.5 242.7 7.8 240.0 C6.1 237.3 4.0 231.5 3.4 228.0 C2.8 224.5 2.1 213.8 2.6 210.3 Z" fill="none" stroke="#f0f0f0" stroke-width="1.3" stroke-linejoin="round"/>
<path d="M372.5 269.3 L369.6 269.3 C366 268 362 266.5 360.7 265.9 L355.2 263.1 C352 265 350.5 267.5 349.3 268.8 C347.5 270.5 346.5 271.8 346.3 272.8 C345.5 276 345.2 278.5 344.9 280.7 L343.9 283.6" fill="none" stroke="#f0f0f0" stroke-width="1.2"/>
<path d="M349.8 281.7 L350.8 278.2 L357.7 273.3 L366.6 272.8 L371 271.3 L371.5 274.8 L366.6 277.2 L353.8 282.7 L347.8 283.1 Z" fill="#090900" stroke="#f0f0f0" stroke-width="1.1" stroke-linejoin="round"/>
<path d="M95.2 92.3 Q104 97 116.4 94 M116.4 93.8 Q124 96 132.6 101 Q131 90 137 83.5" fill="none" stroke="#f0f0f0" stroke-width="1.3"/>
<path d="M148.7 66 L147.5 70.5" fill="none" stroke="#f0f0f0" stroke-width="1.2"/>
<path d="M129.8 2.0 C129.7 4.8 129.3 9.3 129.4 14.0 C129.5 18.7 129.5 18.9 130.4 22.0 C131.3 25.1 131.8 24.9 133.3 27.2 C134.8 29.5 134.1 28.7 137.0 32.0 C139.9 35.3 142.4 37.4 145.6 41.5 C148.8 45.6 148.2 44.3 150.5 49.4 C152.8 54.5 154.3 60.0 155.4 63.2" fill="none" stroke="#f4f4f4" stroke-width="2.8" stroke-linecap="round"/>
<path d="M129.8 2.0 C129.7 4.8 129.3 9.3 129.4 14.0 C129.5 18.7 129.5 18.9 130.4 22.0 C131.3 25.1 131.8 24.9 133.3 27.2 C134.8 29.5 134.1 28.7 137.0 32.0 C139.9 35.3 142.4 37.4 145.6 41.5 C148.8 45.6 148.2 44.3 150.5 49.4 C152.8 54.5 154.3 60.0 155.4 63.2" fill="none" stroke="#cfc67a" stroke-width="0.9" stroke-dasharray="0 20 200"/>
<path d="M155.4 63.2 L159.4 71.1 L163.3 77" fill="none" stroke="#b8aa14" stroke-width="1.4"/>
<path d="M397.3 201.6 Q399 200.3 401.2 200.8 L400.6 203.2 L400.2 207 L398.2 207.4 L397.9 204 Z" fill="#f2e400"/><path d="M395.6 204 L396.4 206" stroke="#8a8000" stroke-width="0.8"/>
</svg><!--/BRAIN-->

<div id="status" class="abs"></div>
<div class="abs" style="left:4px;top:793px;font-size:15px;color:#111;line-height:18px">Analyze: interactively segment and quantify infarcts.</div>
<svg class="abs" style="left:1080px;top:798px" width="12" height="12"><g fill="#bdbdbd"><rect x="11" y="3" width="3" height="3"/><rect x="7" y="7" width="3" height="3"/><rect x="11" y="7" width="3" height="3"/><rect x="3" y="11" width="3" height="3"/><rect x="7" y="11" width="3" height="3"/><rect x="11" y="11" width="3" height="3"/></g></svg>
</body></html>
